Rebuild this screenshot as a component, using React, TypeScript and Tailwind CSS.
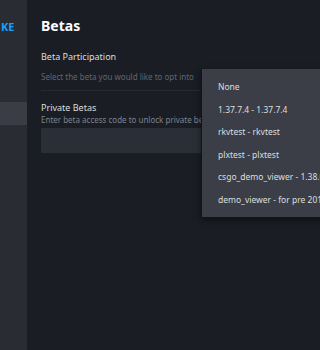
const options = [
  "None",
  "1.37.7.4 - 1.37.7.4",
  "rkvtest - rkvtest",
  "plxtest - plxtest",
  "csgo_demo_viewer - 1.38.0.0 demo viewer",
  "demo_viewer - for pre 2013 demos",
];

export default function App() {
  return (
    <div
      className="relative flex h-[350px] w-[320px] overflow-hidden bg-[#1a1d24]"
      style={{ fontFamily: '"Noto Sans", "Open Sans", sans-serif' }}
    >
      {/* sidebar */}
      <aside className="flex w-[27px] shrink-0 flex-col bg-[#292c33]">
        <div className="mt-[20px] h-[14px] overflow-hidden whitespace-nowrap text-[11px] font-bold leading-[14px] text-[#1a9fff]">
          <span className="pl-[1px]">KE</span>
        </div>
        <div className="mt-[68px] h-[23px] bg-[#3a3d45]" />
      </aside>

      {/* main */}
      <main className="flex flex-1 flex-col pl-[14px]">
        <h1 className="mt-[16px] text-[14px] font-bold leading-[20px] text-white">Betas</h1>

        <div className="mt-[14px] text-[9px] leading-[14px] text-[#dcdedf]">Beta Participation</div>
        <div className="mt-[7px] whitespace-nowrap text-[8px] leading-[12px] text-[#60666e]">
          Select the beta you would like to opt into
        </div>
        <div className="mt-[7px] h-px bg-[#262a31]" />

        <div className="mt-[11px] text-[9px] leading-[12px] text-[#dcdedf]">Private Betas</div>
        <div className="whitespace-nowrap text-[8px] leading-[11px] text-[#7d848d]">
          Enter beta access code to unlock private betas
        </div>
        <div className="mt-[3px] h-[25px] bg-[#2a2e36]" />
      </main>

      {/* dropdown menu */}
      <div className="absolute left-[201px] top-[69px] h-[149px] w-[140px] border-b border-l border-[#121419] bg-[#3b3e47] pl-[16px] pt-[11px] shadow-[0_2px_6px_rgba(0,0,0,0.5)]">
        {options.map((o) => (
          <div key={o} className="h-[22.6px] whitespace-nowrap text-[8.5px] leading-[14px] text-[#dcdedf]">
            {o}
          </div>
        ))}
      </div>
    </div>
  );
}
